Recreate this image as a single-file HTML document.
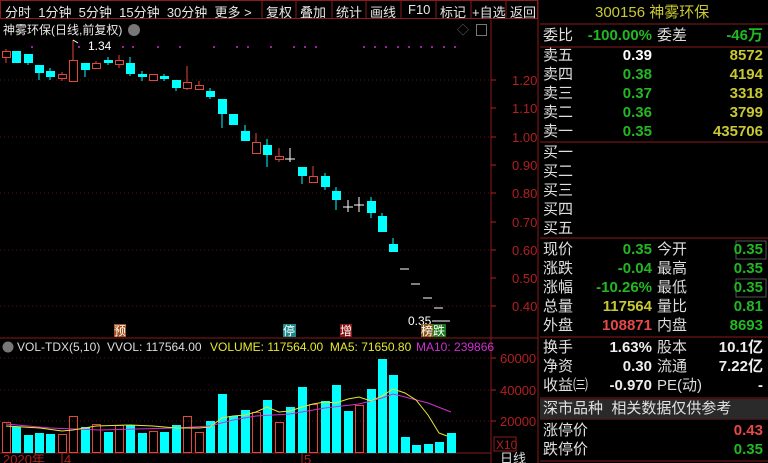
<!DOCTYPE html>
<html><head><meta charset="utf-8"><style>
body{margin:0;width:768px;height:463px;background:#000;overflow:hidden;position:relative;font-family:"Liberation Sans","Noto Sans CJK SC",sans-serif;color:#ddd}
.a{position:absolute;white-space:nowrap}
.tb{font-size:13px;color:#e8e8e8;top:2px}
.r{font-size:15px;line-height:19px}
.lab{left:543px;color:#e0e0e0}
.v{text-align:right;width:110px}
.g{color:#22b822}.y{color:#c8c832}.w{color:#fff}.rd{color:#e84848}
</style></head><body>
<div class="a" style="left:0;top:0;width:538px;height:19px;border:1px solid #8a1c1c;box-sizing:border-box"></div>
<div class="a tb" style="left:5px">分时&nbsp; 1分钟&nbsp; 5分钟&nbsp; 15分钟&nbsp; 30分钟&nbsp; 更多 &gt;</div>
<svg class="a" style="left:0;top:0" width="540" height="20"><g stroke="#8a1c1c">
<line x1="262" y1="0" x2="262" y2="19"/><line x1="296" y1="0" x2="296" y2="19"/><line x1="332" y1="0" x2="332" y2="19"/><line x1="366" y1="0" x2="366" y2="19"/><line x1="401" y1="0" x2="401" y2="19"/><line x1="436" y1="0" x2="436" y2="19"/><line x1="471" y1="0" x2="471" y2="19"/><line x1="506" y1="0" x2="506" y2="19"/></g></svg>
<div class="a tb" style="left:266px">复权</div><div class="a tb" style="left:300px">叠加</div><div class="a tb" style="left:336px">统计</div><div class="a tb" style="left:370px">画线</div><div class="a tb" style="left:408px">F10</div><div class="a tb" style="left:440px">标记</div><div class="a tb" style="left:472px">+自选</div><div class="a tb" style="left:510px">返回</div>
<div class="a" style="left:3px;top:21px;font-size:12px;color:#e8e8e8">神雾环保(日线,前复权)</div>
<div class="a" style="left:128px;top:24px;width:12px;height:12px;border-radius:6px;background:#777"></div>
<div class="a" style="left:457px;top:21px;font-size:12px;color:#666">◇</div>
<div class="a" style="left:476px;top:24px;width:9px;height:10px;border:1px solid #777"></div>

<svg class="a" style="left:0;top:0" width="540" height="463">
<g stroke="#8a1c1c"><line x1="491" y1="20" x2="491" y2="463"/><line x1="538" y1="0" x2="538" y2="463"/><line x1="0" y1="338" x2="538" y2="338"/><line x1="0" y1="453" x2="491" y2="453"/></g>
<g stroke="#5a1414" stroke-dasharray="1,3"><line x1="0" y1="80" x2="491" y2="80"/><line x1="0" y1="137" x2="491" y2="137"/><line x1="0" y1="193" x2="491" y2="193"/><line x1="0" y1="250" x2="491" y2="250"/><line x1="0" y1="306" x2="491" y2="306"/><line x1="0" y1="358" x2="491" y2="358"/><line x1="0" y1="390" x2="491" y2="390"/><line x1="0" y1="421" x2="491" y2="421"/></g>
<g stroke="#b02020"><line x1="491" y1="80" x2="496" y2="80"/><line x1="491" y1="108" x2="496" y2="108"/><line x1="491" y1="137" x2="496" y2="137"/><line x1="491" y1="165" x2="496" y2="165"/><line x1="491" y1="193" x2="496" y2="193"/><line x1="491" y1="222" x2="496" y2="222"/><line x1="491" y1="250" x2="496" y2="250"/><line x1="491" y1="278" x2="496" y2="278"/><line x1="491" y1="306" x2="496" y2="306"/><line x1="491" y1="358" x2="496" y2="358"/><line x1="491" y1="390" x2="496" y2="390"/><line x1="491" y1="421" x2="496" y2="421"/><line x1="62" y1="453" x2="62" y2="463"/><line x1="302" y1="453" x2="302" y2="463"/></g>
<g fill="#b02020" font-size="13" font-family="Liberation Sans">
<text x="512" y="85">1.20</text><text x="512" y="113">1.10</text><text x="512" y="142">1.00</text><text x="512" y="170">0.90</text><text x="512" y="198">0.80</text><text x="512" y="227">0.70</text><text x="512" y="255">0.60</text><text x="512" y="283">0.50</text><text x="512" y="311">0.40</text>
<text x="500" y="363">60000</text><text x="500" y="395">40000</text><text x="500" y="426">20000</text>
<text x="3" y="464">2020年</text><text x="64" y="464">4</text><text x="304" y="464">5</text></g>
<rect x="494" y="437" width="22" height="14" fill="none" stroke="#8a1c1c"/><text x="496" y="449" fill="#b02020" font-size="12" font-family="Liberation Sans">X10</text>
<text x="500" y="463" fill="#ddd" font-size="13" font-family="Liberation Sans,Noto Sans CJK SC">日线</text>
<g fill="#a020a0"><rect x="31" y="46" width="2" height="2"/><rect x="78" y="46" width="2" height="2"/><rect x="90" y="46" width="2" height="2"/><rect x="122" y="46" width="2" height="2"/><rect x="132" y="46" width="2" height="2"/><rect x="157" y="46" width="2" height="2"/><rect x="179" y="46" width="2" height="2"/><rect x="213" y="46" width="2" height="2"/><rect x="236" y="46" width="2" height="2"/><rect x="247" y="46" width="2" height="2"/><rect x="270" y="46" width="2" height="2"/><rect x="293" y="46" width="2" height="2"/><rect x="304" y="46" width="2" height="2"/><rect x="315" y="46" width="2" height="2"/><rect x="363" y="46" width="2" height="2"/><rect x="374" y="46" width="2" height="2"/><rect x="385" y="46" width="2" height="2"/><rect x="397" y="46" width="2" height="2"/><rect x="408" y="46" width="2" height="2"/><rect x="420" y="46" width="2" height="2"/><rect x="431" y="46" width="2" height="2"/><rect x="443" y="46" width="2" height="2"/><rect x="454" y="46" width="2" height="2"/></g>
<g stroke-width="1">
<g stroke="#e0483a"><line x1="6" y1="49" x2="6" y2="63"/><line x1="62" y1="72" x2="62" y2="81"/><line x1="73" y1="40" x2="73" y2="81"/><line x1="96" y1="61" x2="96" y2="68"/><line x1="119" y1="55" x2="119" y2="68"/><line x1="187" y1="66" x2="187" y2="90"/><line x1="199" y1="81" x2="199" y2="89"/><line x1="256" y1="133" x2="256" y2="153"/><line x1="279" y1="148" x2="279" y2="162"/><line x1="313" y1="166" x2="313" y2="182"/></g>
<g stroke="#00ffff"><line x1="28" y1="54" x2="28" y2="65"/><line x1="39" y1="65" x2="39" y2="80"/><line x1="50" y1="68" x2="50" y2="80"/><line x1="85" y1="63" x2="85" y2="77"/><line x1="108" y1="57" x2="108" y2="65"/><line x1="130" y1="57" x2="130" y2="76"/><line x1="142" y1="71" x2="142" y2="81"/><line x1="164" y1="74" x2="164" y2="81"/><line x1="176" y1="80" x2="176" y2="91"/><line x1="210" y1="88" x2="210" y2="99"/><line x1="222" y1="99" x2="222" y2="128"/><line x1="245" y1="125" x2="245" y2="141"/><line x1="267" y1="139" x2="267" y2="167"/><line x1="302" y1="167" x2="302" y2="184"/><line x1="325" y1="173" x2="325" y2="190"/><line x1="336" y1="187" x2="336" y2="210"/><line x1="371" y1="197" x2="371" y2="218"/><line x1="382" y1="213" x2="382" y2="232"/><line x1="393" y1="238" x2="393" y2="252"/></g>
<g stroke="#fff"><line x1="290" y1="148" x2="290" y2="162"/><line x1="285" y1="159" x2="295" y2="159"/><line x1="348" y1="200" x2="348" y2="212"/><line x1="343" y1="207" x2="353" y2="207"/><line x1="359" y1="197" x2="359" y2="212"/><line x1="354" y1="205" x2="364" y2="205"/><line x1="400" y1="269" x2="409" y2="269"/><line x1="411" y1="284" x2="420" y2="284"/><line x1="423" y1="298" x2="432" y2="298"/><line x1="434" y1="308" x2="443" y2="308"/>
<line x1="73" y1="40" x2="78" y2="43"/></g>
</g>
<g fill="#000" stroke="#e0483a"><rect x="2.5" y="51.5" width="8" height="6"/><rect x="58.5" y="74.5" width="8" height="4"/><rect x="69.5" y="60.5" width="8" height="21"/><rect x="92.5" y="63.5" width="8" height="5"/><rect x="115.5" y="60.5" width="8" height="4"/><rect x="149.5" y="74.5" width="8" height="6"/><rect x="183.5" y="82.5" width="8" height="6"/><rect x="195.5" y="85.5" width="8" height="4"/><rect x="252.5" y="142.5" width="8" height="11"/><rect x="275.5" y="156.5" width="8" height="3"/><rect x="309.5" y="176.5" width="8" height="6"/></g>
<g fill="#00ffff"><rect x="12" y="51" width="9" height="12"/><rect x="24" y="54" width="9" height="9"/><rect x="35" y="65" width="9" height="8"/><rect x="46" y="71" width="9" height="6"/><rect x="81" y="63" width="9" height="7"/><rect x="104" y="60" width="9" height="3"/><rect x="126" y="63" width="9" height="11"/><rect x="138" y="74" width="9" height="3"/><rect x="160" y="76" width="9" height="3"/><rect x="172" y="80" width="9" height="8"/><rect x="206" y="91" width="9" height="6"/><rect x="218" y="99" width="9" height="15"/><rect x="229" y="114" width="9" height="11"/><rect x="241" y="131" width="9" height="10"/><rect x="263" y="145" width="9" height="10"/><rect x="298" y="167" width="9" height="9"/><rect x="321" y="176" width="9" height="11"/><rect x="332" y="191" width="9" height="9"/><rect x="367" y="201" width="9" height="12"/><rect x="378" y="216" width="9" height="16"/><rect x="389" y="244" width="9" height="8"/></g>
<text x="88" y="50" fill="#fff" font-size="12" font-family="Liberation Sans">1.34</text>
<text x="408" y="325" fill="#fff" font-size="12" font-family="Liberation Sans">0.35</text><line x1="432" y1="321" x2="450" y2="321" stroke="#fff"/>
<g font-size="12" font-family="Noto Sans CJK SC,sans-serif"><rect x="114" y="324" width="12" height="13" fill="#a0501c"/><text x="114" y="335" fill="#fff">预</text>
<rect x="283" y="324" width="13" height="13" fill="#1c8a8a"/><text x="283" y="335" fill="#fff">停</text>
<rect x="340" y="324" width="12" height="13" fill="#8a1414"/><text x="340" y="335" fill="#fff">增</text>
<rect x="421" y="324" width="12" height="13" fill="#8a5a1c"/><text x="421" y="335" fill="#fff">榜</text>
<rect x="433" y="324" width="13" height="13" fill="#1c7a1c"/><text x="433" y="335" fill="#fff">跌</text></g>
<circle cx="8" cy="347" r="5.5" fill="#777"/>
<text x="17" y="351" font-size="12" font-family="Liberation Sans" fill="#ddd">VOL-TDX(5,10)&#160; VVOL: 117564.00</text>
<text x="210" y="351" font-size="12" font-family="Liberation Sans" fill="#e8e830">VOLUME: 117564.00&#160; MA5: 71650.80</text>
<text x="416" y="351" font-size="12" font-family="Liberation Sans" fill="#d030d0">MA10: 239866</text>
<g fill="none" stroke="#e0483a"><rect x="2.5" y="422.5" width="8" height="30"/><rect x="58.5" y="434.5" width="8" height="18"/><rect x="69.5" y="416.5" width="8" height="36"/><rect x="92.5" y="424.5" width="8" height="28"/><rect x="115.5" y="425.5" width="8" height="27"/><rect x="149.5" y="431.5" width="8" height="21"/><rect x="183.5" y="416.5" width="8" height="36"/><rect x="195.5" y="432.5" width="8" height="20"/><rect x="252.5" y="412.5" width="8" height="40"/><rect x="275.5" y="422.5" width="8" height="30"/><rect x="309.5" y="404.5" width="8" height="48"/><rect x="355.5" y="405.5" width="8" height="47"/></g>
<g fill="#00ffff"><rect x="12" y="427" width="9" height="26"/><rect x="24" y="435" width="9" height="18"/><rect x="35" y="433" width="9" height="20"/><rect x="46" y="434" width="9" height="19"/><rect x="81" y="427" width="9" height="26"/><rect x="104" y="432" width="9" height="21"/><rect x="126" y="425" width="9" height="28"/><rect x="138" y="433" width="9" height="20"/><rect x="160" y="432" width="9" height="21"/><rect x="172" y="425" width="9" height="28"/><rect x="206" y="421" width="9" height="32"/><rect x="218" y="394" width="9" height="59"/><rect x="229" y="416" width="9" height="37"/><rect x="241" y="410" width="9" height="43"/><rect x="263" y="400" width="9" height="53"/><rect x="286" y="407" width="9" height="46"/><rect x="298" y="387" width="9" height="66"/><rect x="321" y="401" width="9" height="52"/><rect x="332" y="385" width="9" height="68"/><rect x="344" y="411" width="9" height="42"/><rect x="367" y="389" width="9" height="64"/><rect x="378" y="359" width="9" height="94"/><rect x="389" y="375" width="9" height="78"/><rect x="401" y="437" width="9" height="16"/><rect x="412" y="445" width="9" height="8"/><rect x="424" y="444" width="9" height="9"/><rect x="435" y="442" width="9" height="11"/><rect x="447" y="433" width="9" height="20"/></g>
<polyline fill="none" stroke="#d030d0" points="6,424 50,428 100,430 176,428 210,426 233,420 256,416 290,414 325,408 359,404 382,398 393,394 405,397 428,403 451,412"/>
<polyline fill="none" stroke="#e8e830" points="6,426 40,428 62,431 73,430 96,426 130,425 153,426 176,428 199,428 210,427 222,418 233,416 245,415 256,412 267,407 279,412 290,411 302,407 313,404 325,402 336,403 348,399 359,397 371,401 382,396 393,389 405,393 416,400 428,415 439,433 447,436"/>
</svg>

<svg class="a" style="left:540px;top:0" width="228" height="463"><g stroke="#8a1c1c"><line x1="0" y1="24" x2="228" y2="24"/><line x1="0" y1="47" x2="228" y2="47"/><line x1="0" y1="142" x2="228" y2="142"/><line x1="0" y1="238" x2="228" y2="238"/><line x1="0" y1="337" x2="228" y2="337"/><line x1="0" y1="398" x2="228" y2="398"/><line x1="0" y1="419" x2="228" y2="419"/><line x1="0" y1="461" x2="228" y2="461"/></g>
<rect x="0" y="399" width="228" height="20" fill="#2a2a2a"/>
<g fill="none" stroke="#555"><rect x="196" y="241" width="30" height="18"/><rect x="196" y="279" width="30" height="18"/></g></svg>
<div class="a r y" style="left:595px;top:3px">300156 神雾环保</div>
<div class="a r lab" style="top:26px">委比</div><div class="a r v g" style="left:542px;top:26px;font-weight:bold">-100.00%</div><div class="a r" style="left:657px;top:26px">委差</div><div class="a r v g" style="left:653px;top:26px;font-weight:bold">-46万</div>
<div class="a r lab" style="top:46px">卖五<br>卖四<br>卖三<br>卖二<br>卖一</div>
<div class="a r v" style="left:542px;top:46px;font-weight:bold"><span class="w">0.39</span><br><span class="g">0.38<br>0.37<br>0.36<br>0.35</span></div>
<div class="a r v y" style="left:653px;top:46px;font-weight:bold">8572<br>4194<br>3318<br>3799<br>435706</div>
<div class="a r lab" style="top:143px">买一<br>买二<br>买三<br>买四<br>买五</div>
<div class="a r lab" style="top:240px">现价<br>涨跌<br>涨幅<br>总量<br>外盘</div>
<div class="a r v" style="left:542px;top:240px;font-weight:bold"><span class="g">0.35<br>-0.04<br>-10.26%</span><br><span class="y">117564</span><br><span class="rd">108871</span></div>
<div class="a r" style="left:657px;top:240px">今开<br>最高<br>最低<br>量比<br>内盘</div>
<div class="a r v g" style="left:653px;top:240px;font-weight:bold">0.35<br>0.35<br>0.35<br>0.81<br>8693</div>
<div class="a r lab" style="top:338px">换手<br>净资<br>收益㈢</div>
<div class="a r v" style="left:542px;top:338px;font-weight:bold;color:#eee">1.63%<br>0.30<br>-0.970</div>
<div class="a r" style="left:657px;top:338px">股本<br>流通<br>PE(动)</div>
<div class="a r v" style="left:653px;top:338px;font-weight:bold;color:#eee">10.1亿<br>7.22亿<br>-</div>
<div class="a r" style="left:543px;top:399px;color:#e0e0e0">深市品种&nbsp; 相关数据仅供参考</div>
<div class="a r lab" style="top:421px">涨停价<br>跌停价</div>
<div class="a r v" style="left:653px;top:421px;font-weight:bold"><span class="rd">0.43</span><br><span class="g">0.35</span></div>
</body></html>
